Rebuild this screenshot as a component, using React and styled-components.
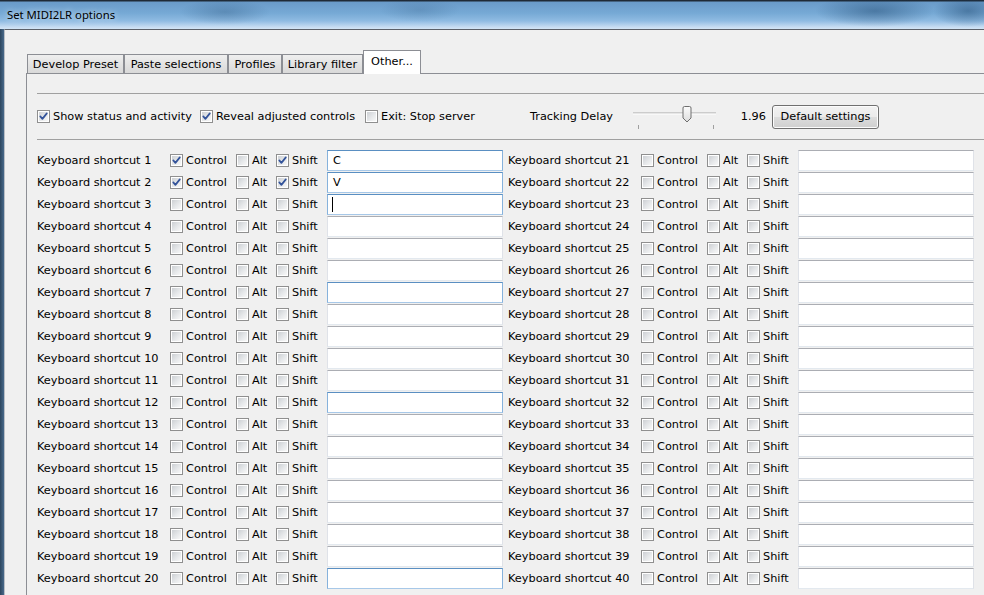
import React from "react";
import styled, { createGlobalStyle } from "styled-components";

const GlobalStyle = createGlobalStyle`
  html, body {
    margin: 0;
    padding: 0;
    overflow: hidden;
    background: #f0f0f0;
  }
  body {
    font-family: "DejaVu Sans", Verdana, sans-serif;
    font-size: 11.3px;
    color: #000;
  }
`;

const Window = styled.div`
  width: 984px;
  height: 595px;
  display: flex;
  flex-direction: column;
  overflow: hidden;
`;

const TitleBar = styled.div`
  height: 29px;
  flex: none;
  box-sizing: border-box;
  display: flex;
  align-items: center;
  padding: 0 0 1px 7px;
  font-family: "Noto Sans", "DejaVu Sans", sans-serif;
  font-size: 11.3px;
  color: #000;
  text-shadow: 0 0 6px rgba(255, 255, 255, 0.9);
  background:
    radial-gradient(ellipse 45px 13px at 225px 12px, rgba(35, 75, 115, 0.3), transparent),
    radial-gradient(ellipse 40px 12px at 420px 10px, rgba(35, 75, 115, 0.2), transparent),
    radial-gradient(ellipse 60px 16px at 875px 11px, rgba(25, 65, 105, 0.45), transparent),
    radial-gradient(ellipse 35px 16px at 968px 11px, rgba(25, 65, 105, 0.45), transparent),
    linear-gradient(
      180deg,
      #1f2a36 0,
      #1f2a36 1px,
      #6a9bc9 2px,
      #76a9d5 45%,
      #8fbbe2 72%,
      #c3daf1 92%,
      #d3e5f6 100%
    );
`;

const Frame = styled.div`
  flex: 1;
  display: flex;
  min-height: 0;
`;

const LeftEdge = styled.div`
  width: 4px;
  flex: none;
  background: linear-gradient(90deg, #2d465e, #48698a);
`;

const Client = styled.div`
  flex: 1;
  box-sizing: border-box;
  border-left: 1px solid #b9bec5;
  border-top: 1px solid #5b6069;
  padding: 20px 0 0 21px;
  background: #f0f0f0;
  display: flex;
  flex-direction: column;
`;

const TabStrip = styled.div`
  height: 24px;
  display: flex;
  align-items: flex-end;
  padding-left: 1px;
  margin-bottom: -1px;
  position: relative;
  z-index: 1;
`;

const Tab = styled.div`
  box-sizing: border-box;
  width: ${(p) => p.$width}px;
  height: ${(p) => (p.$active ? "24px" : "20px")};
  padding: 0 0 ${(p) => (p.$active ? "2px" : "0")};
  display: flex;
  align-items: center;
  justify-content: center;
  border: 1px solid #8c8e94;
  border-bottom: ${(p) => (p.$active ? "none" : "1px solid #8c8e94")};
  background: ${(p) =>
    p.$active ? "#fff" : "linear-gradient(180deg, #efefef 0%, #e3e3e3 50%, #d9d9d9 100%)"};
  white-space: nowrap;
`;

const Panel = styled.div`
  flex: 1;
  border-left: 1px solid #8c8e94;
  border-top: 1px solid #8c8e94;
  padding-left: 10px;
  display: flex;
  flex-direction: column;
`;

const Divider = styled.div`
  height: 1px;
  background: #a0a0a0;
  margin-top: ${(p) => p.$top || 0}px;
  flex: none;
`;

const OptionsRow = styled.div`
  height: 45px;
  display: flex;
  align-items: center;
`;

const CheckLabel = styled.label`
  display: flex;
  align-items: center;
  gap: 3px;
  width: ${(p) => (p.$width ? `${p.$width}px` : "auto")};
  flex: none;
  white-space: nowrap;
`;

const Box = styled.span`
  position: relative;
  flex: none;
  width: 13px;
  height: 13px;
  box-sizing: border-box;
  border: 1px solid #8f8f8f;
  background: #fff;

  &::before {
    content: "";
    position: absolute;
    inset: 1px;
    background: linear-gradient(135deg, #cdd0d4 0%, #e6e8ea 55%, #f8f8f8 100%);
  }

  svg {
    position: absolute;
    inset: 0;
  }
`;

const TrackLabel = styled.span`
  width: 103px;
  flex: none;
`;

const Value = styled.span`
  width: 55px;
  flex: none;
  text-align: right;
  padding-right: 6px;
  box-sizing: border-box;
`;

const Button = styled.div`
  width: 107px;
  height: 24px;
  box-sizing: border-box;
  display: flex;
  align-items: center;
  justify-content: center;
  border: 1px solid #707070;
  border-radius: 3px;
  box-shadow: inset 0 0 0 1px #fcfcfc;
  background: linear-gradient(180deg, #f2f2f2 0%, #ebebeb 50%, #dddddd 51%, #cfcfcf 100%);
`;

const ShortcutGrid = styled.div`
  margin-top: 10px;
  display: grid;
  grid-template-columns: 471px 471px;
  grid-template-rows: repeat(20, 21px);
  row-gap: 1px;
  grid-auto-flow: column;
`;

const ShortcutRow = styled.div`
  display: grid;
  grid-template-columns: 133px 66px 40px 51px 176px;
  align-items: center;
`;

const TextField = styled.div`
  height: 21px;
  box-sizing: border-box;
  display: flex;
  align-items: center;
  padding-left: 5px;
  background: #fff;
  border: 1px solid;
  border-color: ${(p) =>
    p.$hot ? "#5a8fc2 #86b2dc #a7c8e8 #86b2dc" : "#abadb3 #dfe2e8 #e3e9ef #dfe2e8"};
`;

const Caret = styled.span`
  width: 1px;
  height: 15px;
  margin-left: -1px;
  background: #000;
`;

function Check({ checked }) {
  return (
    <Box>
      {checked && (
        <svg width="11" height="11" viewBox="0 0 11 11">
          <path
            d="M2.3 5.4 L4.4 7.9 L8.8 2.4"
            fill="none"
            stroke="#33539a"
            strokeWidth="1.7"
            strokeLinecap="round"
            strokeLinejoin="round"
          />
        </svg>
      )}
    </Box>
  );
}

function Slider() {
  return (
    <svg width="84" height="28" viewBox="0 0 84 28" style={{ flex: "none" }}>
      <defs>
        <linearGradient id="thumb" x1="0" y1="0" x2="0" y2="1">
          <stop offset="0" stopColor="#fcfcfc" />
          <stop offset="1" stopColor="#dcdcdc" />
        </linearGradient>
      </defs>
      <line x1="0" y1="10" x2="83" y2="10" stroke="#a9a9a9" strokeWidth="1" />
      <line x1="0" y1="11" x2="83" y2="11" stroke="#ffffff" strokeWidth="1" />
      <line x1="5.5" y1="22" x2="5.5" y2="26" stroke="#a0a0a0" />
      <line x1="80.5" y1="22" x2="80.5" y2="26" stroke="#a0a0a0" />
      <path
        d="M51.5 3.5 h5 a1.5 1.5 0 0 1 1.5 1.5 v10 l-4 4 l-4 -4 v-10 a1.5 1.5 0 0 1 1.5 -1.5 z"
        fill="url(#thumb)"
        stroke="#6e6e6e"
      />
    </svg>
  );
}

const tabs = [
  { label: "Develop Preset", width: 97 },
  { label: "Paste selections", width: 104 },
  { label: "Profiles", width: 54 },
  { label: "Library filter", width: 81 },
  { label: "Other...", width: 58, active: true },
];

const preset = {
  1: { control: true, shift: true, key: "C" },
  2: { control: true, shift: true, key: "V" },
  3: { caret: true },
};
const hotFields = [1, 2, 3, 7, 12, 20];

const shortcuts = Array.from({ length: 40 }, (_, i) => {
  const n = i + 1;
  return { n, hot: hotFields.includes(n), ...(preset[n] || {}) };
});

export default function App() {
  return (
    <Window>
      <GlobalStyle />
      <TitleBar>Set MIDI2LR options</TitleBar>
      <Frame>
        <LeftEdge />
        <Client>
          <TabStrip>
            {tabs.map((t) => (
              <Tab key={t.label} $width={t.width} $active={t.active}>
                {t.label}
              </Tab>
            ))}
          </TabStrip>
          <Panel>
            <Divider $top={19} />
            <OptionsRow>
              <CheckLabel $width={163}>
                <Check checked />
                Show status and activity
              </CheckLabel>
              <CheckLabel $width={165}>
                <Check checked />
                Reveal adjusted controls
              </CheckLabel>
              <CheckLabel $width={165}>
                <Check />
                Exit: Stop server
              </CheckLabel>
              <TrackLabel>Tracking Delay</TrackLabel>
              <Slider />
              <Value>1.96</Value>
              <Button>Default settings</Button>
            </OptionsRow>
            <Divider />
            <ShortcutGrid>
              {shortcuts.map((s) => (
                <ShortcutRow key={s.n}>
                  <span>Keyboard shortcut {s.n}</span>
                  <CheckLabel>
                    <Check checked={s.control} />
                    Control
                  </CheckLabel>
                  <CheckLabel>
                    <Check />
                    Alt
                  </CheckLabel>
                  <CheckLabel>
                    <Check checked={s.shift} />
                    Shift
                  </CheckLabel>
                  <TextField $hot={s.hot}>
                    {s.key}
                    {s.caret && <Caret />}
                  </TextField>
                </ShortcutRow>
              ))}
            </ShortcutGrid>
          </Panel>
        </Client>
      </Frame>
    </Window>
  );
}
